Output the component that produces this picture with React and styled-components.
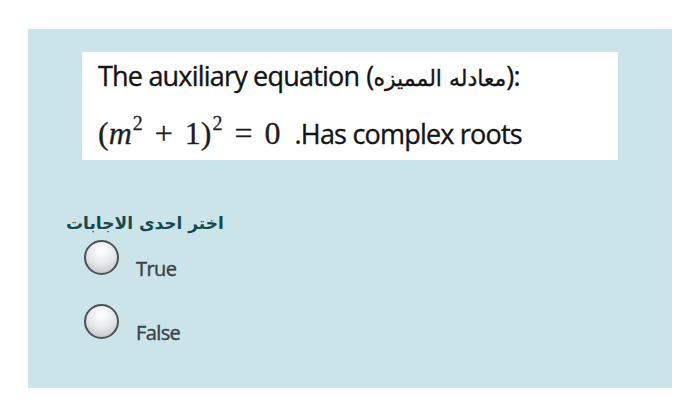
import React from "react";
import styled, { createGlobalStyle } from "styled-components";

const GlobalStyle = createGlobalStyle`
  html, body {
    margin: 0;
    padding: 0;
    background: #ffffff;
  }
`;

const Page = styled.div`
  padding: 29px 28px 15px 28px;
`;

const Panel = styled.div`
  background: #cbe4e9;
  height: 359px;
  padding: 23px 0 0 54px;
  box-sizing: border-box;
`;

const QuestionImage = styled.div`
  width: 536px;
  height: 108px;
  background: #ffffff;
  box-sizing: border-box;
  padding: 5px 0 0 16px;
  color: #141414;
  font-family: "Open Sans", "DejaVu Sans", sans-serif;
  -webkit-text-stroke: 0.35px #141414;
`;

const Line = styled.div`
  display: flex;
  align-items: baseline;
  height: ${(p) => p.h}px;
  font-size: 27px;
  letter-spacing: -0.8px;
  white-space: nowrap;
`;

const Arabic = styled.span`
  font-family: "DejaVu Sans", sans-serif;
  font-size: 22px;
  letter-spacing: 0;
  unicode-bidi: isolate;
  direction: rtl;
`;

const Paren = styled.span`
  margin-left: ${(p) => p.ml || 0}px;
`;

const Math = styled.span`
  font-family: "Liberation Serif", "DejaVu Serif", serif;
  font-size: 32px;
  letter-spacing: 0;
  color: #1e1e1e;
  -webkit-text-stroke: 0.3px #1e1e1e;
  margin-right: 14px;
  word-spacing: 4px;
  sup {
    font-size: 20px;
    vertical-align: 14px;
    line-height: 0;
    margin-left: 1px;
  }
  i {
    font-style: italic;
  }
`;

const Prompt = styled.div`
  margin: 53px 0 0 -16px;
  font-family: "DejaVu Sans", sans-serif;
  font-size: 17px;
  font-weight: bold;
  color: #174a4f;
  direction: rtl;
  width: max-content;
`;

const Options = styled.div`
  display: flex;
  flex-direction: column;
  gap: 22px;
  margin: 7px 0 0 2px;
`;

const Option = styled.label`
  display: flex;
  align-items: flex-start;
  gap: 17px;
`;

const Radio = styled.span`
  width: 31px;
  height: 31px;
  border-radius: 50%;
  border: 2px solid #4d5153;
  background: radial-gradient(circle at 50% 30%, #ffffff 0%, #e8eaeb 45%, #b9bcbe 100%);
  flex: none;
`;

const OptionText = styled.span`
  font-family: "Open Sans", sans-serif;
  font-size: 20px;
  color: #3a4144;
  -webkit-text-stroke: 0.4px #3a4144;
  margin-top: 15px;
  letter-spacing: -0.6px;
`;

export default function App() {
  return (
    <>
      <GlobalStyle />
      <Page>
        <Panel>
          <QuestionImage>
            <Line h={58}>
              The auxiliary equation
              <Paren ml={7}>(</Paren>
              <Arabic>معادله المميزه</Arabic>
              <Paren>):</Paren>
            </Line>
            <Line h={40}>
              <Math>
                (<i>m</i><sup>2</sup> + 1)<sup>2</sup> = 0
              </Math>
              .Has complex roots
            </Line>
          </QuestionImage>
          <Prompt>اختر احدى الاجابات</Prompt>
          <Options>
            <Option>
              <Radio />
              <OptionText>True</OptionText>
            </Option>
            <Option>
              <Radio />
              <OptionText>False</OptionText>
            </Option>
          </Options>
        </Panel>
      </Page>
    </>
  );
}
